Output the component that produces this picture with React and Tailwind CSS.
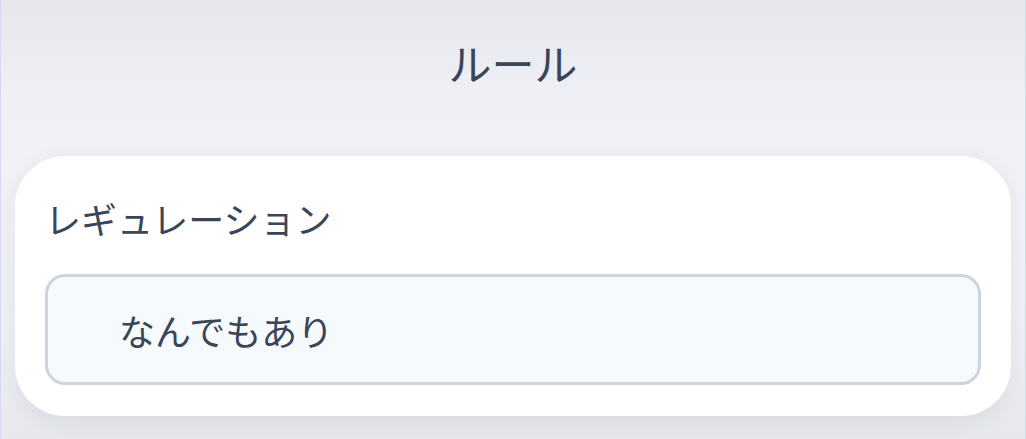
export default function App() {
  return (
    <div
      className="w-full h-[439px] overflow-hidden border-l border-r border-[#d4d8f0] bg-[linear-gradient(180deg,#e6e7ec_0%,#eff0f5_22%,#f2f3f8_50%,#eef0f4_80%,#e6e8ed_100%)] flex flex-col"
      style={{ fontFamily: '"Noto Sans CJK JP", "Noto Sans", sans-serif' }}
    >
      <div className="h-[156px] flex items-start justify-center pt-[32px]">
        <h1 className="text-[43px] leading-[60px] font-normal text-[#3a4558]">ルール</h1>
      </div>
      <div className="mx-[14px] bg-white rounded-[50px] px-[30px] pt-[30px] pb-[31px] shadow-[0_6px_24px_rgba(30,40,70,0.08)]">
        <div className="text-[36px] leading-[64px] text-[#3a4558]">レギュレーション</div>
        <div className="mt-[24px] h-[111px] rounded-[20px] border-[3px] border-[#cbd5e1] bg-[#f7fafd] flex items-center pl-[71px]">
          <span className="text-[36px] text-[#3a4558] leading-none">なんでもあり</span>
        </div>
      </div>
    </div>
  );
}
